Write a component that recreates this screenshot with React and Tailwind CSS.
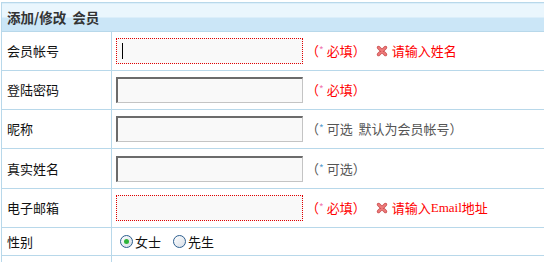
const font = { fontFamily: '"Noto Sans CJK SC", "Noto Sans", sans-serif' };

const ErrX = () => (
  <svg width="12" height="12" viewBox="0 0 12 12" className="inline-block mr-[4px]">
    <path d="M2.5 2.5 L9.5 9.5 M9.5 2.5 L2.5 9.5" stroke="#c85050" strokeWidth="3.4" strokeLinecap="round" />
    <path d="M2.5 2.5 L9.5 9.5 M9.5 2.5 L2.5 9.5" stroke="#ee7a7a" strokeWidth="2" strokeLinecap="round" />
  </svg>
);

const Note = ({ text, red }) => (
  <span className={red ? "text-[#ff0000] whitespace-pre" : "text-[#555555] whitespace-pre"}>
    （<span className={red ? "text-[#f07ab0] text-[10px] align-[2px] mr-[3px]" : "text-[#5aa0d0] text-[10px] align-[2px] mr-[3px]"}>*</span>{text}）
  </span>
);

const Field = ({ error, caret }) => (
  <div
    className={
      "relative w-[187px] h-[26px] bg-[#f9f9f9] " +
      (error
        ? "border border-dotted border-[#e00000]"
        : "border-t-2 border-l-2 border-b border-r border-t-[#6b6b6b] border-l-[#6b6b6b] border-b-[#c4c4c4] border-r-[#c4c4c4]")
    }
  >
    {caret && <span className="absolute left-[5px] top-[4px] w-px h-[16px] bg-black" />}
  </div>
);

const Row = ({ label, children, h = "h-[39px]" }) => (
  <tr className={h}>
    <td className="w-[110px] pl-[5px] border border-[#b8d8ea] text-[13px] text-[#111111]">{label}</td>
    <td className="pl-[4px] border border-[#b8d8ea] text-[13px]">
      <div className="flex items-center">{children}</div>
    </td>
  </tr>
);

export default function App() {
  return (
    <div className="w-[544px] h-[262px] overflow-hidden bg-white pt-[2px] pl-[1px]" style={font}>
      <table className="w-[570px] border-collapse">
        <tbody>
          <tr className="h-[29px]">
            <td
              colSpan={2}
              className="pl-[5px] border border-[#b8d8ea] bg-gradient-to-b from-[#eaf6fd] from-50% to-[#cbe6f7] to-50% text-[13.5px] font-bold text-[#333333]"
            >
              添加/修改&nbsp; 会员
            </td>
          </tr>
          <Row label="会员帐号">
            <Field error caret />
            <span className="ml-[3px]"><Note text="必填" red /></span>
            <span className="ml-[10px] flex items-center text-[#ff0000]"><ErrX />请输入姓名</span>
          </Row>
          <Row label="登陆密码">
            <Field />
            <span className="ml-[3px]"><Note text="必填" red /></span>
          </Row>
          <Row label="昵称">
            <Field />
            <span className="ml-[3px]"><Note text="可选  默认为会员帐号" /></span>
          </Row>
          <Row label="真实姓名" h="h-[40px]">
            <Field />
            <span className="ml-[3px]"><Note text="可选" /></span>
          </Row>
          <Row label="电子邮箱">
            <Field error />
            <span className="ml-[3px]"><Note text="必填" red /></span>
            <span className="ml-[10px] flex items-center text-[#ff0000]">
              <ErrX />请输入<span style={{ fontFamily: '"Liberation Serif", serif' }}>Email</span>地址
            </span>
          </Row>
          <Row label="性别" h="h-[28px]">
            <label className="ml-[4px] flex items-center text-[13px] text-[#111111]">
              <span className="w-[13px] h-[13px] rounded-full border border-[#2d5f8f] bg-gradient-to-br from-[#ffffff] to-[#d6dde6] flex items-center justify-center mr-[2px]">
                <span className="w-[5px] h-[5px] rounded-full bg-[#2fb43a]" />
              </span>
              女士
            </label>
            <label className="ml-[12px] flex items-center text-[13px] text-[#111111]">
              <span className="w-[13px] h-[13px] rounded-full border border-[#2d5f8f] bg-gradient-to-br from-[#ffffff] to-[#d6dde6] mr-[2px]" />
              先生
            </label>
          </Row>
          <Row label="" h="h-[30px]">
            <span />
          </Row>
        </tbody>
      </table>
    </div>
  );
}
